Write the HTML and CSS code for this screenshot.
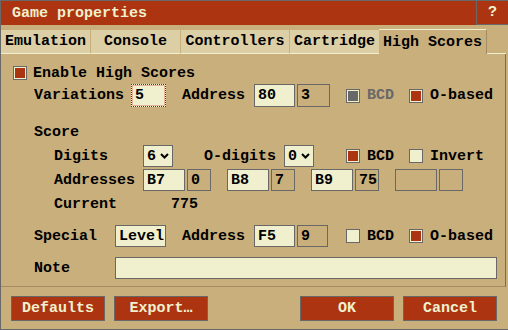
FILE: index.html
```html
<!DOCTYPE html>
<html lang="en">
<head>
    <meta charset="UTF-8">
    <title>Game properties</title>
    <link rel="stylesheet" href="styles.css">
</head>
<body>

<div class="dialog">
    <div class="titlebar">
        <span class="title">Game properties</span>
        <span class="help">?</span>
    </div>

    <div class="tabs">
        <div class="tab tab-emu">Emulation</div>
        <div class="tab tab-console">Console</div>
        <div class="tab tab-ctrl">Controllers</div>
        <div class="tab tab-cart">Cartridge</div>
        <div class="tab active">High Scores</div>
        <div class="tab-fill"></div>
    </div>

    <div class="panel">
        <div class="row row-enable">
            <span class="check on"></span>
            <span class="check-text">Enable High Scores</span>
        </div>

        <div class="row row-var indent">
            <span class="lbl lbl-var">Variations</span>
            <span class="field focus w-var">5</span>
            <span class="lbl lbl-addr">Address</span>
            <span class="field w-addr">80</span>
            <span class="field ro w-ro">3</span>
            <span class="opt opt-bcd"><span class="check disabled"></span><span class="check-text dim">BCD</span></span>
            <span class="opt"><span class="check on"></span><span class="check-text">O-based</span></span>
        </div>

        <div class="row row-score indent">
            <span class="lbl">Score</span>
        </div>

        <div class="row row-digits sub">
            <span class="lbl lbl-sub">Digits</span>
            <span class="field select">6<svg width="9" height="6" viewBox="0 0 9 6"><polyline points="1,1 4.5,4.5 8,1" fill="none" stroke="#000" stroke-width="2"/></svg></span>
            <span class="lbl lbl-odig">O-digits</span>
            <span class="field select">0<svg width="9" height="6" viewBox="0 0 9 6"><polyline points="1,1 4.5,4.5 8,1" fill="none" stroke="#000" stroke-width="2"/></svg></span>
            <span class="opt opt-bcd2"><span class="check on"></span><span class="check-text">BCD</span></span>
            <span class="opt"><span class="check"></span><span class="check-text">Invert</span></span>
        </div>

        <div class="row row-addrs sub">
            <span class="lbl lbl-sub">Addresses</span>
            <span class="group"><span class="field w-a">B7</span><span class="field ro w-v">0</span></span>
            <span class="group"><span class="field w-a">B8</span><span class="field ro w-v">7</span></span>
            <span class="group"><span class="field w-a">B9</span><span class="field ro w-v">75</span></span>
            <span class="group"><span class="field ro w-a"></span><span class="field ro w-v"></span></span>
        </div>

        <div class="row row-current sub">
            <span class="lbl lbl-cur">Current</span>
            <span>775</span>
        </div>

        <div class="row row-special indent">
            <span class="lbl lbl-spec">Special</span>
            <span class="field w-level">Level</span>
            <span class="lbl lbl-addr">Address</span>
            <span class="field w-addr">F5</span>
            <span class="field ro w-ro2">9</span>
            <span class="opt opt-bcd3"><span class="check"></span><span class="check-text">BCD</span></span>
            <span class="opt"><span class="check on"></span><span class="check-text">O-based</span></span>
        </div>

        <div class="row row-note indent">
            <span class="lbl lbl-spec">Note</span>
            <span class="field w-note"></span>
        </div>
    </div>

    <div class="footer">
        <button class="btn">Defaults</button>
        <button class="btn btn-export">Export…</button>
        <button class="btn btn-ok">OK</button>
        <button class="btn btn-cancel">Cancel</button>
    </div>
</div>

</body>
</html>
```

FILE: styles.css
```css
html, body {
    margin: 0;
    padding: 0;
    overflow: hidden;
    background: #c9af7c;
}
body {
    font-family: "Liberation Mono", "DejaVu Sans Mono", monospace;
    font-size: 15px;
    font-weight: bold;
    color: #000;
}
.dialog {
    width: 507px;
    height: 328px;
    background: #c9af7c;
    border: 1px solid #686868;
    border-right: none;
    display: flex;
    flex-direction: column;
}

/* title bar */
.titlebar {
    height: 24px;
    background: #ac3410;
    color: #f0f0cf;
    display: flex;
    align-items: center;
}
.title {
    margin-left: 11px;
    flex: 1;
}
.help {
    width: 31px;
    height: 23px;
    border-left: 1px solid #686868;
    border-bottom: 1px solid #686868;
    display: flex;
    align-items: center;
    justify-content: center;
}

/* tabs */
.tabs {
    display: flex;
    align-items: flex-start;
    margin-top: 4px;
    height: 25px;
}
.tab {
    box-sizing: border-box;
    height: 24px;
    margin-top: 1px;
    background: #dccfa5;
    border-right: 1px solid #c9af7c;
    border-bottom: 1px solid #f0f0cf;
    display: flex;
    align-items: center;
    justify-content: center;
}
.tab-emu { width: 90px; }
.tab-console { width: 90px; }
.tab-ctrl { width: 109px; }
.tab-cart { width: 89px; border-right: none; }
.tab.active {
    width: 108px;
    height: 25px;
    margin-top: 0;
    background: #c9af7c;
    border-top: 1px solid #f0f0cf;
    border-right: 1px solid #a38c61;
    border-bottom: none;
}
.tab-fill {
    flex: 1;
    margin-right: 2px;
    height: 25px;
    box-sizing: border-box;
    border-bottom: 1px solid #f0f0cf;
}

/* panel */
.panel {
    box-sizing: border-box;
    width: 505px;
    height: 233px;
    border-right: 1px solid #7c6c50;
    border-bottom: 1px solid #a38c61;
}
.row {
    display: flex;
    align-items: center;
}
.indent { padding-left: 33px; }
.sub { padding-left: 53px; }
.row-enable { margin-top: 12px; height: 14px; padding-left: 12px; }
.row-var { margin-top: 4px; height: 23px; }
.row-score { margin-top: 13px; height: 24px; }
.row-digits { margin-top: 1px; height: 22px; }
.row-addrs { margin-top: 2px; height: 22px; }
.row-current { margin-top: 1px; height: 24px; }
.row-special { margin-top: 9px; height: 22px; }
.row-note { margin-top: 10px; height: 22px; }

.lbl { display: inline-block; }
.lbl-var { width: 97px; }
.lbl-addr { width: 72px; margin-left: 16px; }
.lbl-sub { width: 89px; }
.lbl-odig { width: 80px; margin-left: 31px; }
.lbl-cur { width: 117px; }
.lbl-spec { width: 81px; }

/* fields */
.field {
    box-sizing: border-box;
    height: 23px;
    border: 1px solid #686868;
    background: #f0f0cf;
    padding-left: 3px;
    display: flex;
    align-items: center;
}
.row-digits .field,
.row-addrs .field,
.row-special .field,
.row-note .field { height: 22px; }
.field.ro { background: #c9af7c; }
.field.focus {
    border: 1px dotted #c80000;
    box-shadow: inset 0 0 0 1px rgba(200, 0, 0, 0.25);
}
.w-var { width: 35px; }
.w-addr { width: 41px; }
.w-ro { width: 33px; margin-left: 2px; }
.w-ro2 { width: 31px; margin-left: 2px; }
.w-level { width: 51px; }
.w-note { width: 382px; }
.w-a { width: 42px; }
.w-v { width: 24px; margin-left: 2px; }
.group {
    display: flex;
    margin-right: 16px;
}
.select {
    width: 30px;
    justify-content: space-between;
    padding-right: 3px;
}

/* checkboxes */
.opt {
    display: flex;
    align-items: center;
    width: 63px;
}
.opt-bcd { margin-left: 16px; }
.opt-bcd2 { margin-left: 32px; }
.opt-bcd3 { margin-left: 18px; }
.check {
    box-sizing: border-box;
    width: 14px;
    height: 14px;
    flex: none;
    border: 1px solid #686868;
    background: #f0f0cf;
}
.check.on {
    background: #ac3410;
    box-shadow: inset 0 0 0 1px #f0f0cf;
}
.check.disabled {
    background: #686868;
    box-shadow: inset 0 0 0 1px #f0f0cf;
}
.check-text { margin-left: 7px; white-space: nowrap; }
.row-enable .check-text { margin-left: 6px; }
.dim { color: #686868; }

/* footer */
.footer {
    display: flex;
    padding: 9px 11px 0 10px;
}
.btn {
    box-sizing: border-box;
    width: 94px;
    height: 25px;
    padding: 0;
    background: #ac3410;
    color: #f0f0cf;
    border: 1px solid #686868;
    font: inherit;
}
.btn-export { margin-left: 9px; }
.btn-ok { margin-left: auto; }
.btn-cancel { margin-left: 9px; }
```
